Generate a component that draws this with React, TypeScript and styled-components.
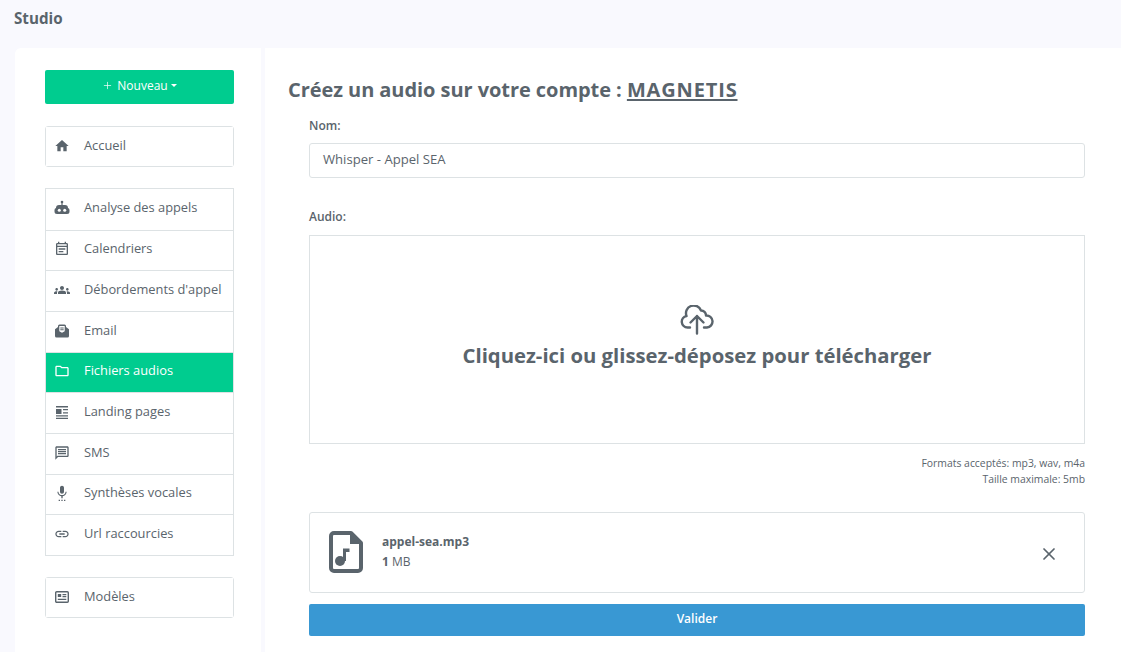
import React from 'react';
import styled, { createGlobalStyle } from 'styled-components';
import { Plus, X } from 'lucide-react';
import {
  MdHome,
  MdOutlineEventNote,
  MdGroups,
  MdOutlineFolder,
  MdOutlineMessage,
  MdSettingsVoice,
  MdLink,
} from 'react-icons/md';

const GlobalStyle = createGlobalStyle`
  html, body {
    margin: 0;
    height: 100%;
    overflow: hidden;
    background: #f9f9fe;
    font-family: "Open Sans", "Liberation Sans", sans-serif;
    color: #5a646c;
  }
  * { box-sizing: border-box; }
`;

const Page = styled.div`
  width: 1121px;
  height: 652px;
  overflow: hidden;
`;

const TopBar = styled.div`
  height: 48px;
  padding: 9px 0 0 14px;
  font-size: 15.2px;
  line-height: 18px;
  font-weight: 700;
`;

const Columns = styled.div`
  display: flex;
  gap: 4px;
  padding-left: 15px;
  height: 604px;
`;

const Sidebar = styled.aside`
  width: 246px;
  background: #fff;
  border-radius: 6px 0 0 0;
  padding: 22px 27px 0 30px;
  display: flex;
  flex-direction: column;
  gap: 21px;
`;

const NewButton = styled.button`
  height: 34px;
  margin-bottom: 1px;
  padding: 0 0 3px;
  border: 0;
  border-radius: 2px;
  background: #00cc8f;
  color: #fff;
  font: inherit;
  font-size: 12px;
  display: flex;
  align-items: center;
  justify-content: center;
  gap: 4px;
`;

const Caret = styled.span`
  width: 0;
  height: 0;
  margin-left: -1px;
  border-left: 3px solid transparent;
  border-right: 3px solid transparent;
  border-top: 3px solid #fff;
`;

const NavGroup = styled.nav<{ $single?: boolean }>`
  border: 1px solid #dde2e4;
  border-radius: ${(p) => (p.$single ? '3px' : '0')};
  display: flex;
  flex-direction: column;
  --row-height: ${(p) => (p.$single ? '39px' : '40.67px')};
  --row-lift: ${(p) => (p.$single ? '3px' : '4px')};
`;

const NavItem = styled.div<{ $active?: boolean }>`
  height: var(--row-height);
  display: flex;
  align-items: center;
  padding: 0 0 var(--row-lift) 8px;
  font-size: 12.85px;
  white-space: nowrap;
  background: ${(p) => (p.$active ? '#00cc8f' : '#fff')};
  color: ${(p) => (p.$active ? '#fff' : '#5a646c')};
  font-weight: ${(p) => (p.$active ? 500 : 400)};
  & + & {
    border-top: 1px solid #dde2e4;
  }
`;

const NavIcon = styled.span`
  width: 16px;
  height: 16px;
  margin-right: 14px;
  flex: none;
  display: flex;
  align-items: center;
  justify-content: center;
  font-size: 16px;
  position: relative;
  top: 1px;
`;

const Main = styled.main`
  flex: 1;
  background: #fff;
  padding: 27px 36px 0 23px;
`;

const Title = styled.h1`
  margin: 0 0 13px;
  font-size: 20px;
  line-height: 30px;
  font-weight: 700;
  letter-spacing: -0.06px;
  u {
    letter-spacing: 0.85px;
    text-underline-offset: 2px;
  }
`;

const Form = styled.form`
  margin-left: 21px;
  display: flex;
  flex-direction: column;
`;

const Label = styled.label<{ $gap: number }>`
  font-size: 12px;
  line-height: 16px;
  font-weight: 600;
  margin-bottom: ${(p) => p.$gap}px;
`;

const TextInput = styled.div`
  height: 35px;
  border: 1px solid #dde2e4;
  border-radius: 3px;
  padding: 0 13px 3px;
  font-size: 13.1px;
  display: flex;
  align-items: center;
  margin-bottom: 31px;
`;

const DropZone = styled.div`
  height: 209px;
  border: 1px solid #dde2e4;
  display: flex;
  flex-direction: column;
  align-items: center;
  padding-top: 69px;
  gap: 5px;
  font-size: 20.3px;
  line-height: 30px;
  font-weight: 700;
`;

const Hint = styled.div`
  margin-top: 11px;
  text-align: right;
  font-size: 10.4px;
  line-height: 16px;
`;

const FileCard = styled.div`
  margin-top: 25px;
  height: 81px;
  border: 1px solid #dde2e4;
  border-radius: 3px;
  display: flex;
  align-items: center;
  padding: 0 25px 2px 19px;
`;

const FileText = styled.div`
  margin-left: 19px;
  flex: 1;
  font-size: 12px;
  line-height: 20px;
  b {
    font-weight: 700;
  }
`;

const RemoveIcon = styled(X)`
  margin-top: 5px;
`;

const SubmitButton = styled.button`
  margin-top: 11px;
  height: 32px;
  padding: 0 0 3px;
  border: 0;
  border-radius: 2px;
  background: #3998d3;
  color: #fff;
  font: inherit;
  font-size: 12px;
  font-weight: 600;
`;

const RobotIcon = () => (
  <svg width="16" height="16" viewBox="0 0 16 16" fill="currentColor">
    <circle cx="8" cy="2" r="1.300" />
    <path d="M7.400 2h1.200v4H7.400Z" />
    <path d="M5 5h6a3 3 0 0 1 3 3a2 2 0 0 1 1.500 1.900v1.700a2.500 2.500 0 0 1-2.500 2.500H3a2.500 2.500 0 0 1-2.500-2.500V9.900A2 2 0 0 1 2 8a3 3 0 0 1 3-3Z" />
    <circle cx="5.300" cy="10.200" r="1.500" fill="#fff" />
    <circle cx="10.700" cy="10.200" r="1.500" fill="#fff" />
  </svg>
);

const EmailIcon = () => (
  <svg width="16" height="16" viewBox="0 0 16 16" fill="currentColor">
    <path d="M1 6.200 4 4V3a1.500 1.500 0 0 1 1.500-1.500h5A1.500 1.500 0 0 1 12 3v1l3 2.200V13a1.500 1.500 0 0 1-1.500 1.500h-11A1.500 1.500 0 0 1 1 13Z" />
    <path fill="#fff" d="M5.300 3h5.400v5.200L8 9.800 5.300 8.200Z" />
    <path d="M6.300 4.500h3.400v1H6.300Zm0 1.800h3.400v.9H6.300Z" />
  </svg>
);

const LandingIcon = () => (
  <svg width="16" height="16" viewBox="0 0 16 16" fill="currentColor">
    <path d="M2 2h12v1.500H2Zm0 3h5.500v5H2Zm7 0h5v1.300H9Zm0 3.300h5v1.300H9ZM2 11.300h12v1.300H2Zm0 2.400h12V15H2Z" />
  </svg>
);

const ModelIcon = () => (
  <svg width="16" height="16" viewBox="0 0 16 16" fill="none" stroke="currentColor" strokeWidth="1.400">
    <rect x="1.700" y="2.700" width="12.600" height="10.600" rx="1" />
    <path fill="currentColor" stroke="none" d="M3.800 5h3.400v3H3.800ZM8.500 5h3.800v1.200H8.500Zm0 2h3.800v1.200H8.500ZM3.800 9.800h8.500V11H3.800Z" />
  </svg>
);

const UploadCloudIcon = () => (
  <svg width="34" height="30" viewBox="0 0 34 30" fill="none" stroke="currentColor" strokeWidth="2.400" strokeLinecap="round" strokeLinejoin="round">
    <path d="M10 22.500H7.500a5.800 5.800 0 0 1-1-11.500A7.500 7.500 0 0 1 21 5.500a5 5 0 0 1 5 5a6 6 0 0 1 1 12H24" />
    <path d="M17 28.500V11M10.500 17.500 17 11l6.500 6.500" />
  </svg>
);

const AudioFileIcon = () => (
  <svg width="34" height="42" viewBox="0 0 34 42" fill="none">
    <path
      d="M5 2h17l10 10v25a3 3 0 0 1-3 3H5a3 3 0 0 1-3-3V5a3 3 0 0 1 3-3Z"
      fill="#fff"
      stroke="#5a646c"
      strokeWidth="4"
      strokeLinejoin="round"
    />
    <path d="M21 2v11h11Z" fill="#5a646c" />
    <circle cx="11" cy="30" r="5" fill="#5a646c" />
    <path d="M14 30V17.500h6.500v3.500H17V30Z" fill="#5a646c" />
  </svg>
);

type Item = { label: string; icon: React.ReactNode; active?: boolean };

const topItems: Item[] = [{ label: 'Accueil', icon: <MdHome /> }];

const toolItems: Item[] = [
  { label: 'Analyse des appels', icon: <RobotIcon /> },
  { label: 'Calendriers', icon: <MdOutlineEventNote /> },
  { label: "Débordements d'appel", icon: <MdGroups /> },
  { label: 'Email', icon: <EmailIcon /> },
  { label: 'Fichiers audios', icon: <MdOutlineFolder />, active: true },
  { label: 'Landing pages', icon: <LandingIcon /> },
  { label: 'SMS', icon: <MdOutlineMessage /> },
  { label: 'Synthèses vocales', icon: <MdSettingsVoice /> },
  { label: 'Url raccourcies', icon: <MdLink /> },
];

const bottomItems: Item[] = [{ label: 'Modèles', icon: <ModelIcon /> }];

const Group = ({ items }: { items: Item[] }) => (
  <NavGroup $single={items.length === 1}>
    {items.map((item) => (
      <NavItem key={item.label} $active={item.active}>
        <NavIcon>{item.icon}</NavIcon>
        {item.label}
      </NavItem>
    ))}
  </NavGroup>
);

const App = () => {
  return (
    <Page>
      <GlobalStyle />
      <TopBar>Studio</TopBar>
      <Columns>
        <Sidebar>
          <NewButton type="button">
            <Plus size={11} strokeWidth={1.5} />
            Nouveau
            <Caret />
          </NewButton>
          <Group items={topItems} />
          <Group items={toolItems} />
          <Group items={bottomItems} />
        </Sidebar>
        <Main>
          <Title>
            Créez un audio sur votre compte : <u>MAGNETIS</u>
          </Title>
          <Form>
            <Label $gap={9}>Nom:</Label>
            <TextInput>Whisper - Appel SEA</TextInput>
            <Label $gap={10}>Audio:</Label>
            <DropZone>
              <UploadCloudIcon />
              Cliquez-ici ou glissez-déposez pour télécharger
            </DropZone>
            <Hint>
              Formats acceptés: mp3, wav, m4a
              <br />
              Taille maximale: 5mb
            </Hint>
            <FileCard>
              <AudioFileIcon />
              <FileText>
                <b>appel-sea.mp3</b>
                <br />
                <b>1</b> MB
              </FileText>
              <RemoveIcon size={20} strokeWidth={2.1} />
            </FileCard>
            <SubmitButton type="button">Valider</SubmitButton>
          </Form>
        </Main>
      </Columns>
    </Page>
  );
};

export default App;
